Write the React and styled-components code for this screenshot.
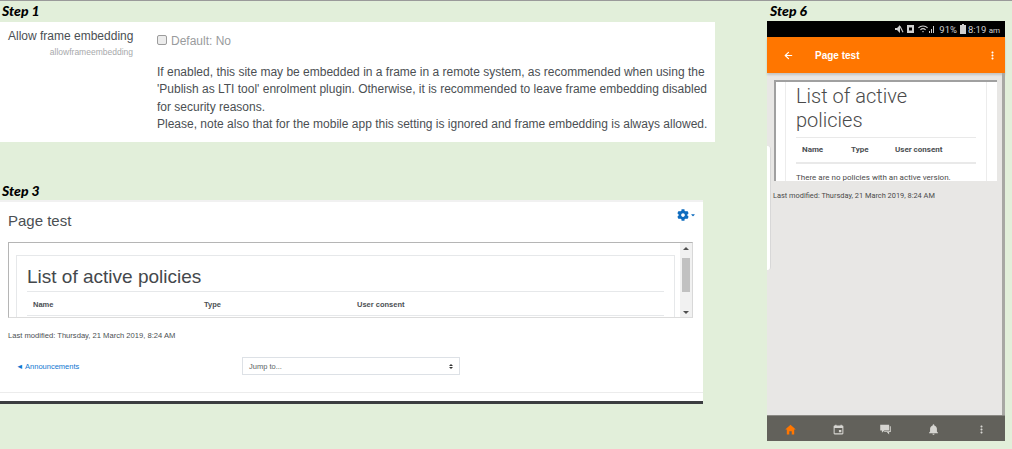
import styled, { createGlobalStyle } from 'styled-components';
import { ArrowLeft } from 'lucide-react';
import { FaCog, FaCaretDown } from 'react-icons/fa';
import { IoMdCalendar, IoMdChatboxes, IoMdHome, IoMdMore, IoMdNotifications } from 'react-icons/io';

const GlobalStyle = createGlobalStyle`
  html, body {
    margin: 0;
    padding: 0;
  }

  body {
    width: 1012px;
    height: 449px;
    overflow: hidden;
    background: #e2efda;
    font-family: "Liberation Sans", Arial, sans-serif;
    color: #4b4f53;
  }
`;

const Page = styled.div`
  display: flex;
  align-items: flex-start;
  height: 449px;
  box-sizing: border-box;
  border-top: 1px solid #9a9a9a;
`;

const LeftColumn = styled.div`
  width: 715px;
  flex: none;
`;

const StepLabel = styled.div`
  font-family: Lato, "Liberation Sans", sans-serif;
  font-size: 14px;
  font-weight: 900;
  font-style: italic;
  line-height: 20px;
  height: ${(props) => props.$height}px;
  padding-left: ${(props) => props.$indent}px;
  color: #000;
`;

const SettingCard = styled.section`
  display: flex;
  background: #fff;
  height: 120px;
  box-sizing: border-box;
  padding-top: 6px;
  margin-bottom: 39px;
`;

const SettingName = styled.div`
  width: 125px;
  margin-left: 8px;
  margin-right: 24px;
  text-align: right;
  flex: none;
`;

const SettingTitle = styled.div`
  font-size: 12px;
  line-height: 16px;
  text-align: left;
  white-space: nowrap;
`;

const SettingKey = styled.div`
  font-size: 8.5px;
  line-height: 12px;
  margin-top: 2px;
  color: #a7a9ab;
`;

const SettingBody = styled.div`
  flex: 1;
`;

const DefaultRow = styled.div`
  display: flex;
  align-items: center;
  gap: 4px;
  height: 24px;
  padding-top: 1px;
  font-size: 12px;
  color: #999b9d;
`;

const Checkbox = styled.span`
  width: 8px;
  height: 8px;
  margin-bottom: 3px;
  border: 1px solid #9c9c9c;
  border-radius: 2px;
  background: #ececec;
  flex: none;
`;

const Help = styled.p`
  margin: 11px 0 0;
  font-size: 12px;
  line-height: 17.3px;
  white-space: nowrap;
`;

const PageCard = styled.section`
  width: 703px;
  height: 204px;
  box-sizing: border-box;
  background: #fff;
  border-top: 2px solid #f1f1f1;
  border-bottom: 3px solid #3b3d40;
`;

const CardHeader = styled.div`
  display: flex;
  justify-content: space-between;
  padding: 6px 7px 0 8px;
  height: 34px;
  box-sizing: border-box;
`;

const CardTitle = styled.h2`
  margin: 4px 0 0;
  font-size: 15px;
  font-weight: 400;
  line-height: 18px;
`;

const ActionMenu = styled.div`
  display: flex;
  align-items: center;
  gap: 1px;
  height: 14px;
  color: #0f6cbf;
  font-size: 12px;
`;

const FrameBox = styled.div`
  display: flex;
  margin: 6px 10px 0 8px;
  height: 76px;
  box-sizing: border-box;
  border-top: 1px solid #b5b5b5;
  border-left: 1px solid #b5b5b5;
  border-right: 1px solid #d8d8d8;
  border-bottom: 1px solid #dcdcdc;
  overflow: hidden;
`;

const FrameContent = styled.div`
  flex: 1;
  padding: 12px 5px 0 7px;
`;

const PolicyPanel = styled.div`
  height: 80px;
  box-sizing: border-box;
  border: 1px solid #e6e8ea;
  padding: 0 10px;
`;

const PolicyHeading = styled.h1`
  margin: 0;
  height: 36px;
  font-size: 19px;
  font-weight: 400;
  line-height: 41px;
  border-bottom: 1px solid #e6e8ea;
  box-sizing: border-box;
  color: #44484c;
`;

const TableHead = styled.div`
  display: flex;
  height: 23px;
  padding-left: 6px;
  border-bottom: 1px solid #e6e8ea;
  font-size: 7.5px;
  font-weight: 700;
  line-height: 25px;
`;

const HeadCell = styled.span`
  width: ${(props) => props.$width}px;
`;

const ScrollBar = styled.div`
  display: flex;
  flex-direction: column;
  align-items: center;
  width: 12px;
  flex: none;
  background: #f1f1f1;
`;

const ScrollArrow = styled.span`
  width: 0;
  height: 0;
  margin: 4px 0;
  border-left: 3px solid transparent;
  border-right: 3px solid transparent;
  ${(props) => (props.$down ? 'border-top: 3px solid #505050;' : 'border-bottom: 3px solid #505050;')}
`;

const ScrollThumb = styled.span`
  width: 8px;
  height: 34px;
  margin: 4px 0 15px;
  background: #c1c1c1;
  flex: none;
`;

const Modified = styled.div`
  margin: 13px 0 0 8px;
  font-size: 7.6px;
  line-height: 10px;
  color: #4b4f53;
`;

const NavRow = styled.div`
  display: flex;
  align-items: center;
  height: 18px;
  margin-top: 16px;
  padding-left: 16px;
`;

const PrevLink = styled.a`
  width: 226px;
  font-size: 7.5px;
  color: #1177d1;
`;

const JumpSelect = styled.div`
  display: flex;
  align-items: center;
  justify-content: space-between;
  width: 218px;
  height: 18px;
  box-sizing: border-box;
  padding: 0 6px;
  border: 1px solid #dde1e6;
  font-size: 7.5px;
  color: #5b5f63;
`;

const SelectArrows = styled.span`
  display: flex;
  flex-direction: column;
  gap: 1px;

  &::before, &::after {
    content: '';
    border-left: 2px solid transparent;
    border-right: 2px solid transparent;
  }

  &::before {
    border-bottom: 2px solid #333;
  }

  &::after {
    border-top: 2px solid #333;
  }
`;

const CardRule = styled.div`
  height: 1px;
  margin-top: 17px;
  background: #ececec;
`;

const RightColumn = styled.div`
  width: 238px;
  margin-left: 52px;
  flex: none;
`;

const Phone = styled.div`
  display: flex;
  flex-direction: column;
  position: relative;
  height: 420px;
  margin-top: -1px;
  background: #e8e7e5;
`;

const StatusBar = styled.div`
  display: flex;
  align-items: center;
  justify-content: flex-end;
  height: 16px;
  padding-right: 5px;
  background: #000;
  color: #cfcfcf;
  font-family: Roboto, sans-serif;
  font-size: 9.5px;
  flex: none;
`;

const StatusIcon = styled.svg`
  width: ${(props) => props.$width}px;
  height: 10px;
  margin-right: ${(props) => props.$gap}px;
  fill: #cfcfcf;
`;

const Percent = styled.span`
  margin-right: 3px;
`;

const Meridiem = styled.span`
  font-size: 8px;
`;

const AppBar = styled.div`
  display: flex;
  align-items: center;
  height: 36px;
  flex: none;
  padding: 0 6px 0 16px;
  background: #ff7600;
  color: #fff;
  box-shadow: 0 2px 2px rgba(0, 0, 0, 0.15);
`;

const AppBarTitle = styled.span`
  flex: 1;
  margin-left: 21px;
  font-size: 10px;
  font-weight: 700;
`;

const PhoneBody = styled.div`
  flex: 1;
  display: flex;
  flex-direction: column;
  box-sizing: border-box;
  border-right: 3px solid #a8a8a4;
  min-height: 0;
`;

const PhoneFrame = styled.div`
  height: 101px;
  margin: 7px 5px 0 7px;
  box-sizing: border-box;
  flex: none;
  padding: 0 10px 0 9px;
  background: #fff;
  border-top: 2px solid #a0a0a0;
  border-left: 2px solid #a0a0a0;
  overflow: hidden;
`;

const PhonePanel = styled.div`
  height: 120px;
  padding: 0 10px;
  border-left: 1px solid #ececec;
  border-right: 1px solid #ececec;
`;

const PhoneHeading = styled.h1`
  margin: 0;
  padding-top: 2px;
  font-family: Roboto, sans-serif;
  font-size: 20px;
  font-weight: 300;
  line-height: 24px;
  color: #4a4a4a;
`;

const PhoneTableHead = styled.div`
  display: flex;
  height: 24px;
  margin-top: 5px;
  padding-left: 6px;
  border-top: 1px solid #e9e9e9;
  border-bottom: 2px solid #e9e9e9;
  font-family: Roboto, sans-serif;
  font-size: 8px;
  font-weight: 700;
  line-height: 24px;
`;

const PhoneNote = styled.div`
  margin-top: 9px;
  font-family: Roboto, sans-serif;
  font-size: 8px;
  color: #4a4a4a;
`;

const PhoneModified = styled.div`
  margin: 10px 0 0 6px;
  font-family: Roboto, sans-serif;
  font-size: 7.4px;
  line-height: 10px;
  color: #4a4a4a;
`;

const BottomBar = styled.div`
  display: flex;
  align-items: center;
  justify-content: space-around;
  height: 26px;
  flex: none;
  box-sizing: border-box;
  padding-top: 2px;
  background: #62615b;
  border-top: 1px solid #8a8984;
  font-size: 13px;
`;

const TabIcon = styled.span`
  display: flex;
  color: ${(props) => (props.$active ? '#ff7600' : '#d6d5d1')};
`;

const EdgeTab = styled.div`
  position: absolute;
  left: 0;
  top: 125px;
  width: 3px;
  height: 124px;
  background: #fff;
  border-right: 1px solid #d8d8d8;
  border-radius: 0 3px 3px 0;
`;

export default function App() {
  return (
    <>
      <GlobalStyle />
      <Page>
        <LeftColumn>
          <StepLabel $height={21} $indent={2}>Step 1</StepLabel>
          <SettingCard>
            <SettingName>
              <SettingTitle>Allow frame embedding</SettingTitle>
              <SettingKey>allowframeembedding</SettingKey>
            </SettingName>
            <SettingBody>
              <DefaultRow>
                <Checkbox />
                Default: No
              </DefaultRow>
              <Help>
                If enabled, this site may be embedded in a frame in a remote system, as recommended when using the
                <br />
                &apos;Publish as LTI tool&apos; enrolment plugin. Otherwise, it is recommended to leave frame embedding disabled
                <br />
                for security reasons.
                <br />
                Please, note also that for the mobile app this setting is ignored and frame embedding is always allowed.
              </Help>
            </SettingBody>
          </SettingCard>
          <StepLabel $height={19} $indent={2}>Step 3</StepLabel>
          <PageCard>
            <CardHeader>
              <CardTitle>Page test</CardTitle>
              <ActionMenu>
                <FaCog />
                <FaCaretDown size={6} />
              </ActionMenu>
            </CardHeader>
            <FrameBox>
              <FrameContent>
                <PolicyPanel>
                  <PolicyHeading>List of active policies</PolicyHeading>
                  <TableHead>
                    <HeadCell $width={171}>Name</HeadCell>
                    <HeadCell $width={153}>Type</HeadCell>
                    <HeadCell $width={100}>User consent</HeadCell>
                  </TableHead>
                </PolicyPanel>
              </FrameContent>
              <ScrollBar>
                <ScrollArrow />
                <ScrollThumb />
                <ScrollArrow $down />
              </ScrollBar>
            </FrameBox>
            <Modified>Last modified: Thursday, 21 March 2019, 8:24 AM</Modified>
            <NavRow>
              <PrevLink>◄ Announcements</PrevLink>
              <JumpSelect>
                Jump to...
                <SelectArrows />
              </JumpSelect>
            </NavRow>
            <CardRule />
          </PageCard>
        </LeftColumn>
        <RightColumn>
          <StepLabel $height={21} $indent={3}>Step 6</StepLabel>
          <Phone>
            <EdgeTab />
            <StatusBar>
              {/* mute */}
              <StatusIcon $width={9} $gap={2} viewBox="0 0 9 10">
                <path d="M0 4h2l3-3v8L2 6H0z" />
                <path d="M5.5 2l3 6-1 .5-3-6z" />
              </StatusIcon>
              {/* alarm */}
              <StatusIcon $width={9} $gap={3} viewBox="0 0 9 10">
                <path fillRule="evenodd" d="M1 1h7v8H1zM3 3.5v3h3v-3z" />
              </StatusIcon>
              {/* wifi and signal */}
              <StatusIcon $width={18} $gap={3} viewBox="0 0 18 10">
                <path d="M0 3.5a7 7 0 0 1 10 0l-.8.8a6 6 0 0 0-8.4 0zM2 5.5a4.3 4.3 0 0 1 6 0l-.8.8a3.2 3.2 0 0 0-4.4 0zM4 7.5a1.5 1.5 0 0 1 2 0L5 8.6z" />
                <path d="M11 7h1v2h-1zM13 5h1v4h-1zM15 2h1v7h-1z" />
              </StatusIcon>
              <Percent>91%</Percent>
              <StatusIcon $width={6} $gap={2} viewBox="0 0 6 10">
                <path d="M2 0h2v1h2v9H0V1h2z" />
              </StatusIcon>
              <span>
                8:19
                {' '}
                <Meridiem>am</Meridiem>
              </span>
            </StatusBar>
            <AppBar>
              <ArrowLeft size={11} strokeWidth={2.5} />
              <AppBarTitle>Page test</AppBarTitle>
              <IoMdMore size={13} />
            </AppBar>
            <PhoneBody>
              <PhoneFrame>
                <PhonePanel>
                  <PhoneHeading>
                    List of active
                    <br />
                    policies
                  </PhoneHeading>
                  <PhoneTableHead>
                    <HeadCell $width={49}>Name</HeadCell>
                    <HeadCell $width={44}>Type</HeadCell>
                    <HeadCell $width={70}>User consent</HeadCell>
                  </PhoneTableHead>
                  <PhoneNote>There are no policies with an active version.</PhoneNote>
                </PhonePanel>
              </PhoneFrame>
              <PhoneModified>Last modified: Thursday, 21 March 2019, 8:24 AM</PhoneModified>
            </PhoneBody>
            <BottomBar>
              <TabIcon $active><IoMdHome /></TabIcon>
              <TabIcon><IoMdCalendar /></TabIcon>
              <TabIcon><IoMdChatboxes /></TabIcon>
              <TabIcon><IoMdNotifications /></TabIcon>
              <TabIcon><IoMdMore /></TabIcon>
            </BottomBar>
          </Phone>
        </RightColumn>
      </Page>
    </>
  );
}
